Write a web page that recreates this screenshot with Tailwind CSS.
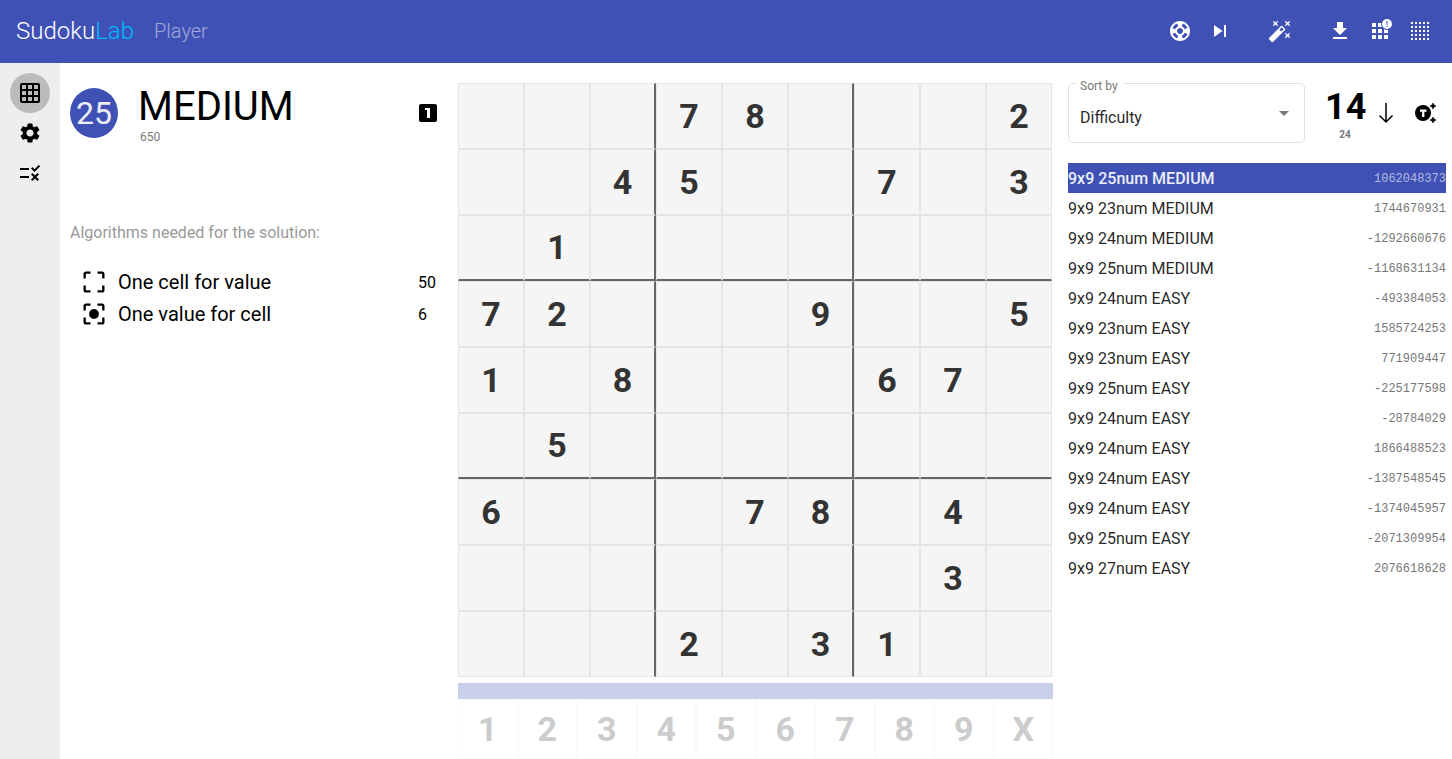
<!DOCTYPE html>
<html lang="en">
<head>
<meta charset="utf-8">
<title>SudokuLab Player</title>
<script src="https://cdn.jsdelivr.net/npm/@tailwindcss/browser@4"></script>
</head>
<body class="flex h-screen flex-col overflow-hidden bg-white font-[Roboto,sans-serif] text-black">
<header class="flex h-[63px] shrink-0 items-center bg-[#3f51b5] px-4 pb-px text-white">
  <h1 class="text-2xl leading-8 font-light">Sudoku<span class="text-[#00b8ff]">Lab</span></h1>
  <span class="ml-5 text-xl font-light text-white/50">Player</span>
  <nav class="ml-auto flex items-center gap-4 pr-1" aria-label="Board actions">
    <button aria-label="Help"><svg class="size-6 fill-current" viewBox="0 0 24 24"><path d="M12 2C6.480 2 2 6.480 2 12s4.480 10 10 10 10-4.480 10-10S17.520 2 12 2zm7.460 7.120l-2.780 1.150c-.51-1.360-1.580-2.440-2.950-2.940l1.150-2.780c2.100.8 3.770 2.470 4.580 4.570zM12 15c-1.660 0-3-1.340-3-3s1.340-3 3-3 3 1.340 3 3-1.340 3-3 3zM9.130 4.540l1.170 2.780c-1.380.5-2.470 1.590-2.980 2.970L4.540 9.130c.81-2.110 2.480-3.780 4.590-4.590zM4.540 14.870l2.780-1.150c.51 1.380 1.590 2.460 2.970 2.960l-1.170 2.780c-2.100-.81-3.770-2.480-4.580-4.590zm10.340 4.590l-1.150-2.780c1.370-.51 2.450-1.590 2.950-2.970l2.780 1.170c-.81 2.100-2.480 3.770-4.580 4.580z"/></svg></button>
    <button aria-label="Next step"><svg class="size-6 fill-current" viewBox="0 0 24 24"><path d="M6 18l8.500-6L6 6v12zM16 6v12h2V6h-2z"/></svg></button>
    <button class="mx-5" aria-label="Solve"><svg class="size-6 fill-current stroke-current" stroke-width=".4" viewBox="0 0 24 24"><path d="M7.500 5.600L10 7 8.600 4.500 10 2 7.500 3.400 5 2l1.400 2.500L5 7zm12 9.800L17 14l1.400 2.500L17 19l2.500-1.400L22 19l-1.400-2.500L22 14zM22 2l-2.500 1.400L17 2l1.400 2.500L17 7l2.500-1.400L22 7l-1.400-2.500zm-7.630 5.290c-.39-.39-1.020-.39-1.410 0L1.290 18.960c-.39.39-.39 1.020 0 1.410l2.340 2.340c.39.39 1.020.39 1.410 0L16.700 11.050c.39-.39.39-1.020 0-1.410l-2.330-2.350zm-1.030 5.490l-2.120-2.120 2.440-2.440 2.120 2.120-2.440 2.440z"/></svg></button>
    <button aria-label="Download"><svg class="size-6 fill-current" viewBox="0 0 24 24"><path d="M19 9h-4V3H9v6H5l7 7 7-7zM5 18v2h14v-2H5z"/></svg></button>
    <button aria-label="Puzzle notices"><svg class="size-6 overflow-visible fill-current" viewBox="0 0 24 24"><path d="M4 4h4v4H4zM10 4h4v4h-4zM4 10h4v4H4zM10 10h4v4h-4zM16 10h4v4h-4zM4 16h4v4H4zM10 16h4v4h-4zM16 16h4v4h-4z"/><circle cx="19" cy="5" r="6" class="fill-[#3f51b5]"/><circle cx="19" cy="5" r="5"/><path class="fill-[#3f51b5]" d="M18.500 2h1v4h-1zM18.500 7h1v1h-1z"/></svg></button>
    <button aria-label="Clear board"><svg class="size-6 stroke-current" viewBox="0 0 24 24" fill="none" stroke-width="2" stroke-dasharray="2 2"><path d="M3 4h18M3 8h18M3 12h18M3 16h18M3 20h18"/></svg></button>
  </nav>
</header>
<div class="flex min-h-0 flex-1">
  <nav class="flex w-15 shrink-0 flex-col items-center bg-[#eee] pt-[10px]" aria-label="Panels">
    <button class="flex size-10 items-center justify-center rounded-full bg-[#bbb]" aria-label="Schema"><svg class="size-6" viewBox="0 0 24 24"><path d="M20 2H4c-1.100 0-2 .9-2 2v16c0 1.100.9 2 2 2h16c1.100 0 2-.9 2-2V4c0-1.100-.9-2-2-2zM8 20H4v-4h4v4zm0-6H4v-4h4v4zm0-6H4V4h4v4zm6 12h-4v-4h4v4zm0-6h-4v-4h4v4zm0-6h-4V4h4v4zm6 12h-4v-4h4v4zm0-6h-4v-4h4v4zm0-6h-4V4h4v4z"/></svg></button>
    <button class="flex size-10 items-center justify-center" aria-label="Settings"><svg class="size-6" viewBox="0 0 24 24"><path d="M19.140 12.940c.04-.3.06-.61.06-.94 0-.32-.02-.64-.07-.94l2.030-1.580c.18-.14.23-.41.12-.61l-1.920-3.320c-.12-.22-.37-.29-.59-.22l-2.390.96c-.5-.38-1.030-.7-1.620-.94l-.36-2.540c-.04-.24-.24-.41-.48-.41h-3.840c-.24 0-.43.17-.47.41l-.36 2.540c-.59.24-1.130.57-1.620.94l-2.390-.96c-.22-.08-.47 0-.59.22L2.740 8.870c-.12.21-.08.47.12.61l2.030 1.580c-.05.3-.09.63-.09.94s.02.64.07.94l-2.030 1.580c-.18.14-.23.41-.12.61l1.920 3.320c.12.22.37.29.59.22l2.390-.96c.5.38 1.030.7 1.620.94l.36 2.540c.05.24.24.41.48.41h3.840c.24 0 .44-.17.47-.41l.36-2.540c.59-.24 1.130-.56 1.620-.94l2.390.96c.22.08.47 0 .59-.22l1.920-3.320c.12-.22.07-.47-.12-.61l-2.010-1.580zM12 15.600c-1.980 0-3.600-1.620-3.600-3.600s1.620-3.600 3.600-3.600 3.600 1.620 3.600 3.600-1.620 3.600-3.600 3.600z"/></svg></button>
    <button class="flex size-10 items-center justify-center" aria-label="Rules"><svg class="size-6" viewBox="0 0 24 24"><path d="M16.540 11L13 7.460l1.410-1.410 2.120 2.120 4.240-4.240 1.410 1.410L16.540 11zM11 7H2v2h9V7zm10 6.410L19.590 12 17 14.590 14.410 12 13 13.410 15.590 16 13 18.590 14.410 20 17 17.410 19.590 20 21 18.590 18.410 16 21 13.410zM11 15H2v2h9v-2z"/></svg></button>
  </nav>
  <main class="flex min-w-0 flex-1">
    <section class="min-w-0 flex-1 px-[10px] pt-5">
      <div class="flex items-center">
        <div class="flex h-[50px] w-12 items-center justify-center rounded-[50%] bg-[#3f51b5] text-[32px] text-white/90">25</div>
        <div class="ml-5">
          <h2 class="text-[40px] leading-[48px]">MEDIUM</h2>
          <div class="pl-[2px] text-xs leading-3 text-[#777]">650</div>
        </div>
        <svg class="mr-2 ml-auto size-6" viewBox="0 0 24 24" role="img" aria-label="Single solution"><path d="M19 3H5c-1.100 0-2 .9-2 2v14c0 1.100.9 2 2 2h14c1.100 0 2-.9 2-2V5c0-1.100-.9-2-2-2zm-5 14h-3V9H9V7h5v10z"/></svg>
      </div>
      <p class="mt-[78px] leading-6 text-[#999]">Algorithms needed for the solution:</p>
      <ul class="mt-[21px] pr-3 pl-[10px]">
        <li class="flex h-8 items-center"><svg class="size-7" viewBox="0 0 24 24"><path d="M3 5v4h2V5h4V3H5c-1.100 0-2 .9-2 2zm2 10H3v4c0 1.100.9 2 2 2h4v-2H5v-4zm14 4h-4v2h4c1.100 0 2-.9 2-2v-4h-2v4zm0-16h-4v2h4v4h2V5c0-1.100-.9-2-2-2z"/></svg><span class="ml-[10px] text-xl">One cell for value</span><span class="ml-auto w-[18px] pt-px">50</span></li>
        <li class="flex h-8 items-center"><svg class="size-7" viewBox="0 0 24 24"><path d="M3 5v4h2V5h4V3H5c-1.100 0-2 .9-2 2zm2 10H3v4c0 1.100.9 2 2 2h4v-2H5v-4zm14 4h-4v2h4c1.100 0 2-.9 2-2v-4h-2v4zm0-16h-4v2h4v4h2V5c0-1.100-.9-2-2-2z"/><circle cx="12" cy="12" r="4.200"/></svg><span class="ml-[10px] text-xl">One value for cell</span><span class="ml-auto w-[18px] pt-px">6</span></li>
      </ul>
    </section>
    <section class="flex w-[595px] shrink-0 flex-col pt-5" aria-label="Sudoku board">
      <div id="board" class="mr-px grid grid-cols-9"></div>
      <div class="mt-[6px] h-4 bg-[#cacfe9]"></div>
      <div id="keys" class="grid grid-cols-10"></div>
    </section>
    <aside class="min-w-0 flex-1 pt-5 pr-[6px] pl-[15px]">
      <div class="flex h-[60px] items-center">
        <div class="relative h-[60px] flex-1">
          <label for="sort" class="absolute -top-[5px] left-2 bg-white pr-[6px] pl-1 text-xs leading-4 text-[#777]">Sort by</label>
          <select id="sort" class="size-full appearance-none rounded-[5px] border border-[#e0e0e0] bg-transparent pt-[10px] pl-[11px] text-base text-black/87"><option>Difficulty</option><option>Name</option></select>
          <svg class="pointer-events-none absolute top-7 right-4 h-[5px] w-[10px] fill-[#777]" viewBox="0 0 10 5"><path d="M0 0h10L5 5z"/></svg>
        </div>
        <div class="ml-5 w-10 text-center font-bold">
          <div class="text-4xl leading-[44px]">14</div>
          <div class="text-[10px] leading-3 text-[#777]">24</div>
        </div>
        <button class="ml-[9px]" aria-label="Sort direction"><svg class="size-6" viewBox="0 0 24 24" fill="none" stroke="#000" stroke-width="1.500"><path d="M12 2v19M5.500 14.500l6.500 6.500 6.500-6.500"/></svg></button>
        <button class="mr-[9px] ml-[15px]" aria-label="Try all"><svg class="size-6" viewBox="0 0 24 24"><circle cx="10" cy="12" r="8"/><path fill="#fff" d="M7 8.500h6.500v2.200H11.400V16H9.100v-5.300H7z"/><path d="M20 2l1 2 2 1-2 1-1 2-1-2-2-1 2-1zM20 16l1 2 2 1-2 1-1 2-1-2-2-1 2-1z" stroke="#000" stroke-width=".6"/></svg></button>
      </div>
      <ul id="list" class="mt-5"></ul>
    </aside>
  </main>
</div>
<script>
const rows = ['000780002','004500703','010000000','720009005','108000670','050000000','600078040','000000030','000203100'];
const board = document.getElementById('board');
rows.forEach((row, y) => [...row].forEach((v, x) => {
  const cell = document.createElement('button');
  cell.className = 'flex h-[66px] items-center justify-center border border-[#e5e5e5] bg-[#f5f5f5] text-[34px] font-bold text-[#333]';
  if (x === 2 || x === 5) cell.classList.add('border-r-2', 'border-r-[#666]');
  if (y === 2 || y === 5) cell.classList.add('border-b-2', 'border-b-[#666]');
  cell.ariaLabel = `Row ${y + 1}, column ${x + 1}`;
  cell.textContent = v === '0' ? '' : v;
  board.append(cell);
}));
[...'123456789X'].forEach(k => {
  const key = document.createElement('button');
  key.className = 'flex h-15 items-center justify-center border border-[#fafafa] text-[34px] font-bold text-[#ccc]';
  key.textContent = k;
  document.getElementById('keys').append(key);
});
[['25num MEDIUM','1062048373'],['23num MEDIUM','1744670931'],['24num MEDIUM','-1292660676'],['25num MEDIUM','-1168631134'],
 ['24num EASY','-493384053'],['23num EASY','1585724253'],['23num EASY','771909447'],['25num EASY','-225177598'],['24num EASY','-28784029'],
 ['24num EASY','1866488523'],['24num EASY','-1387548545'],['24num EASY','-1374045957'],['25num EASY','-2071309954'],['27num EASY','2076618628']
].forEach(([name, id], i) => {
  const li = document.createElement('li');
  li.className = i ? 'flex h-[30px] items-center justify-between pt-[2px] text-black/87' : 'flex h-[30px] items-center justify-between bg-[#3f51b5] pt-[2px] font-medium text-white/90';
  const a = document.createElement('span');
  a.textContent = '9x9 ' + name;
  const b = document.createElement('span');
  b.className = i ? 'font-["Liberation_Mono",monospace] text-xs text-[#777]' : 'font-["Liberation_Mono",monospace] text-xs font-normal text-white/60';
  b.textContent = id;
  li.append(a, b);
  document.getElementById('list').append(li);
});
</script>
</body>
</html>
